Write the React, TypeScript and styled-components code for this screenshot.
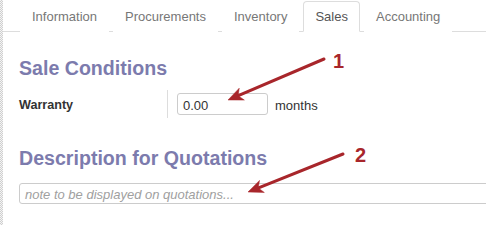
import React from "react";
import styled, { createGlobalStyle } from "styled-components";

const Global = createGlobalStyle`
  html, body { margin: 0; padding: 0; background: #fff; }
  body { font-family: "Liberation Sans", Arial, sans-serif; font-size: 13px; color: #333; }
  * { box-sizing: border-box; }
`;

const Page = styled.div`
  position: relative;
  width: 486px;
  height: 225px;
  overflow: hidden;
  display: flex;
`;

const Edge = styled.div`
  flex: 0 0 3px;
  background: repeating-conic-gradient(#cfcfcf 0 25%, #f4f4f4 0 50%) 0 0 / 2px 2px;
`;

const Main = styled.div`
  flex: 1;
  display: flex;
  flex-direction: column;
  min-width: 0;
`;

const TabBar = styled.div`
  display: flex;
  align-items: flex-end;
  height: 32px;
  padding-left: 17px;
  border-bottom: 1px solid #ddd;
`;

const Tab = styled.div<{ $active?: boolean }>`
  height: 31px;
  margin-bottom: -1px;
  margin-right: 4px;
  padding: 0 11px 1px;
  display: flex;
  align-items: center;
  border: 1px solid ${(p) => (p.$active ? "#ddd" : "transparent")};
  border-bottom-color: ${(p) => (p.$active ? "#fff" : "transparent")};
  border-radius: 4px 4px 0 0;
  background: #fff;
  color: ${(p) => (p.$active ? "#555" : "#777")};
  font-size: 13px;
  white-space: nowrap;
`;

const Sheet = styled.div`
  padding-left: 16px;
  display: flex;
  flex-direction: column;
`;

const Heading = styled.h2<{ $top: number }>`
  margin: ${(p) => p.$top}px 0 0;
  font-size: 19.6px;
  font-weight: bold;
  color: #7c7bad;
  line-height: 21px;
  white-space: nowrap;
`;

const FieldRow = styled.div`
  margin-top: 11px;
  display: flex;
  align-items: stretch;
  height: 28px;
`;

const Label = styled.div`
  width: 148px;
  display: flex;
  align-items: center;
  padding-top: 2px;
  font-weight: bold;
  font-size: 12.6px;
  color: #333;
`;

const Value = styled.div`
  border-left: 1px solid #ddd;
  padding-left: 9px;
  display: flex;
  align-items: center;
  gap: 7px;
`;

const NumInput = styled.div`
  width: 91px;
  height: 22px;
  border: 1px solid #ccc;
  border-radius: 3px;
  padding: 0 5px;
  display: flex;
  align-items: center;
  padding-top: 2px;
  font-size: 13px;
  color: #333;
`;

const Unit = styled.span`
  font-size: 13px;
  color: #333;
  padding-top: 3px;
`;

const NoteBox = styled.div`
  margin-top: 14px;
  width: 500px;
  height: 21px;
  border: 1px solid #ccc;
  border-radius: 3px;
  padding: 0 5px;
  display: flex;
  align-items: center;
  padding-top: 1px;
  font-style: italic;
  color: #a0a0a0;
  font-size: 13px;
  white-space: nowrap;
`;

const Overlay = styled.svg`
  position: absolute;
  left: 0;
  top: 0;
  pointer-events: none;
`;

const Num = styled.span<{ $x: number; $y: number }>`
  position: absolute;
  left: ${(p) => p.$x}px;
  top: ${(p) => p.$y}px;
  font-size: 20px;
  font-weight: bold;
  color: #a8262b;
  line-height: 20px;
`;

function Arrow({ x1, y1, x2, y2 }: { x1: number; y1: number; x2: number; y2: number }) {
  const dx = x2 - x1;
  const dy = y2 - y1;
  const len = Math.hypot(dx, dy);
  const ux = dx / len;
  const uy = dy / len;
  const hl = 15;
  const hw = 6.5;
  const bx = x2 - ux * hl;
  const by = y2 - uy * hl;
  const nx = -uy;
  const ny = ux;
  const pts = `${x2},${y2} ${bx + nx * hw},${by + ny * hw} ${x2 - ux * (hl - 4)},${y2 - uy * (hl - 4)} ${bx - nx * hw},${by - ny * hw}`;
  return (
    <g fill="#a8262b" stroke="#a8262b">
      <line x1={x1} y1={y1} x2={x2 - ux * 8} y2={y2 - uy * 8} strokeWidth={3} strokeLinecap="round" />
      <polygon points={pts} strokeWidth={0.5} strokeLinejoin="round" />
    </g>
  );
}

export default function App() {
  const tabs = ["Information", "Procurements", "Inventory", "Sales", "Accounting"];
  return (
    <>
      <Global />
      <Page>
        <Edge />
        <Main>
          <TabBar>
            {tabs.map((t) => (
              <Tab key={t} $active={t === "Sales"}>
                {t}
              </Tab>
            ))}
          </TabBar>
          <Sheet>
            <Heading $top={26}>Sale Conditions</Heading>
            <FieldRow>
              <Label>Warranty</Label>
              <Value>
                <NumInput>0.00</NumInput>
                <Unit>months</Unit>
              </Value>
            </FieldRow>
            <Heading $top={30}>Description for Quotations</Heading>
            <NoteBox>note to be displayed on quotations...</NoteBox>
          </Sheet>
        </Main>
        <Overlay width={486} height={225} viewBox="0 0 486 225">
          <Arrow x1={324} y1={59} x2={228} y2={100} />
          <Arrow x1={343} y1={154} x2={248} y2={192} />
        </Overlay>
        <Num $x={333} $y={51}>1</Num>
        <Num $x={355} $y={145}>2</Num>
      </Page>
    </>
  );
}
